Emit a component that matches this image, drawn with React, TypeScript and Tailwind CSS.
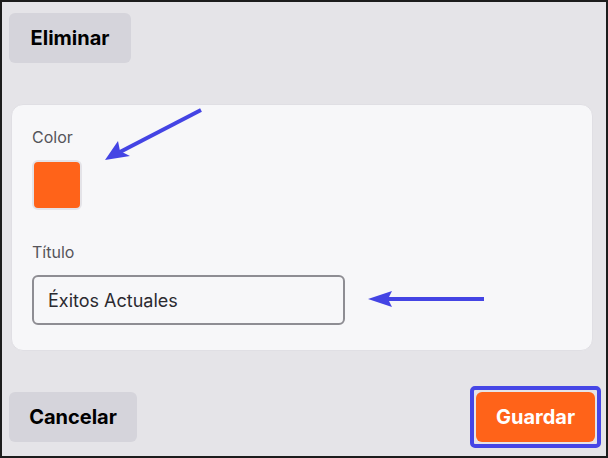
import React from 'react';

const font = { fontFamily: 'Inter, "Noto Sans", sans-serif' };

const Arrows = () => (
  <svg className="pointer-events-none absolute inset-0" width="608" height="458" viewBox="0 0 608 458">
    <line x1="199" y1="108" x2="116" y2="151" stroke="#4444e4" strokeWidth="4" strokeLinecap="butt" />
    <path d="M103 158 L116 139 L118 149 L128 154 Z" fill="#4444e4" />
    <line x1="482" y1="297" x2="384" y2="297" stroke="#4444e4" strokeWidth="4" />
    <path d="M366 297 L390 289 L386 297 L390 305 Z" fill="#4444e4" />
  </svg>
);

export default function App() {
  return (
    <div className="relative w-[608px] h-[458px] border-2 border-[#1c1c1c] bg-[#e5e4e8] flex flex-col" style={font}>
      <div className="pl-[7px] pt-[11px]">
        <button className="h-[50px] w-[122px] rounded-md bg-[#d5d4db] text-[20px] font-bold text-black">
          Eliminar
        </button>
      </div>

      <div className="mt-[41px] ml-[9px] mr-[13px] h-[247px] rounded-xl border border-[#e0dfe4] bg-[#f7f7f9] px-[20px] pt-[20px]">
        <div className="text-[16px] text-[#55545a]">Color</div>
        <div className="mt-[11px] h-[50px] w-[50px] rounded-md border-2 border-[#e4e3e8] bg-[#ff6319]" />
        <div className="mt-[30px] text-[16px] text-[#55545a]">Título</div>
        <div className="mt-[11px] flex h-[50px] w-[313px] items-center rounded-md border-2 border-[#8e8d93] px-[14px] text-[18px] text-[#2b2a30]">
          Éxitos Actuales
        </div>
      </div>

      <div className="mt-auto mb-[8px] flex items-center justify-between pl-[7px] pr-[5px]">
        <button className="h-[50px] w-[128px] rounded-md bg-[#d5d4db] text-[20px] font-bold text-black">
          Cancelar
        </button>
        <div className="rounded-[5px] border-[4px] border-[#4646e6] p-[2px]">
          <button className="h-[50px] w-[119px] rounded-md bg-[#ff6319] text-[20px] font-bold text-white">
            Guardar
          </button>
        </div>
      </div>

      <Arrows />
    </div>
  );
}
